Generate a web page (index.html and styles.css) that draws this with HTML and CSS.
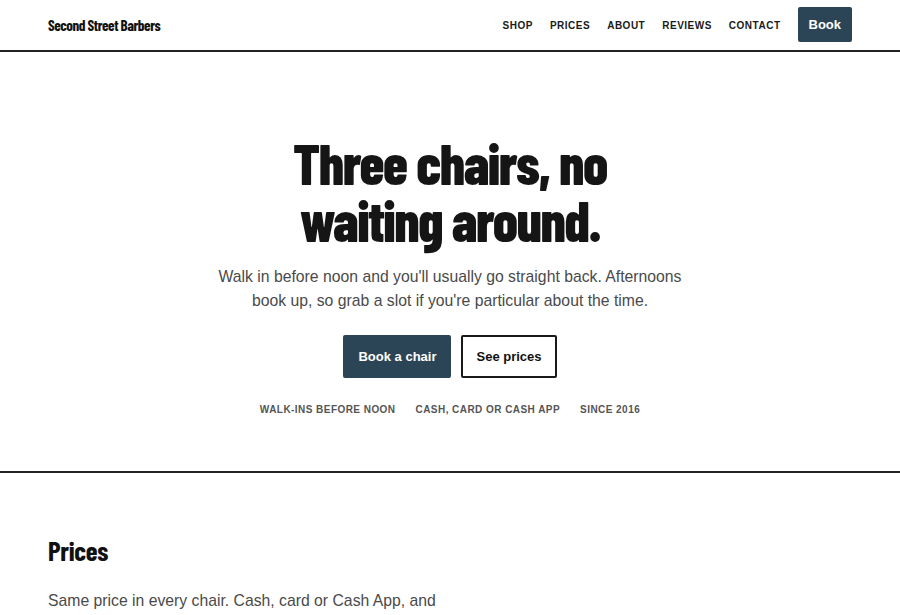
FILE: index.html
```html
<!DOCTYPE html>
<html lang="en">
<head>
<meta charset="utf-8">
<title>Second Street Barbers</title>
<link rel="stylesheet" href="styles.css">
</head>
<body>
<header class="site-header">
  <a class="logo" href="#">Second Street Barbers</a>
  <nav class="nav">
    <a href="#">Shop</a>
    <a href="#">Prices</a>
    <a href="#">About</a>
    <a href="#">Reviews</a>
    <a href="#">Contact</a>
    <a class="btn-book" href="#">Book</a>
  </nav>
</header>
<main>
  <section class="hero">
    <h1 class="hero-title">Three chairs, no<br>waiting around.</h1>
    <p class="hero-lead">Walk in before noon and you'll usually go straight back. Afternoons book up, so grab a slot if you're particular about the time.</p>
    <div class="hero-actions">
      <a class="btn btn-primary" href="#">Book a chair</a>
      <a class="btn btn-outline" href="#">See prices</a>
    </div>
    <ul class="hero-meta">
      <li>Walk-ins before noon</li>
      <li>Cash, card or Cash App</li>
      <li>Since 2016</li>
    </ul>
  </section>
  <section class="prices">
    <h2 class="section-title">Prices</h2>
    <p class="section-lead">Same price in every chair. Cash, card or Cash App, and no charge for a beard line-up with any cut.</p>
  </section>
</main>
</body>
</html>
```
FILE: styles.css
```css
* { box-sizing: border-box; }
html, body { margin: 0; padding: 0; }
body {
  font-family: "Liberation Sans", Arial, sans-serif;
  color: #1a1a1a;
  background: #fff;
}
a { color: inherit; text-decoration: none; }

.site-header {
  height: 52px;
  padding: 0 48px;
  display: flex;
  align-items: center;
  justify-content: space-between;
  border-bottom: 2px solid #222;
}
.logo {
  font-family: "Barlow Condensed", sans-serif;
  font-weight: 700;
  font-size: 15px;
  letter-spacing: -0.45px;
  color: #111;
}
.nav {
  display: flex;
  align-items: center;
  gap: 17px;
}
.nav a {
  font-size: 10px;
  font-weight: 700;
  text-transform: uppercase;
  letter-spacing: 0.5px;
  color: #1a1a1a;
}
.nav a.btn-book {
  background: #2b4557;
  color: #fff;
  text-transform: none;
  letter-spacing: 0;
  font-size: 13px;
  height: 35px;
  padding: 0 11px;
  display: flex;
  align-items: center;
  border-radius: 2px;
  margin-top: -1px;
}

.hero {
  padding: 82px 48px 54px;
  text-align: center;
  border-bottom: 2px solid #222;
}
.hero-title {
  font-family: "Barlow Condensed", sans-serif;
  font-weight: 800;
  font-size: 56px;
  line-height: 57px;
  letter-spacing: -1.5px;
  margin: 0 0 17px;
  color: #151515;
}
.hero-lead {
  font-size: 15.75px;
  line-height: 23.5px;
  color: #4a4a4a;
  max-width: 480px;
  margin: 0 auto 23px;
}
.hero-actions {
  display: flex;
  justify-content: center;
  gap: 10px;
}
.btn {
  height: 43px;
  padding: 0 13px;
  display: inline-flex;
  align-items: center;
  font-size: 13px;
  font-weight: 700;
  border: 2px solid #2b4557;
  border-radius: 2px;
}
.btn-primary { background: #2b4557; color: #fff; }
.btn-outline { background: #fff; color: #111; border-color: #1a1a1a; }

.hero-meta {
  list-style: none;
  padding: 0;
  margin: 25px 0 0;
  display: flex;
  justify-content: center;
  gap: 20px;
}
.hero-meta li {
  font-size: 10px;
  line-height: 14px;
  font-weight: 700;
  text-transform: uppercase;
  letter-spacing: 0.45px;
  color: #555;
}

.prices {
  padding: 62px 48px 40px;
}
.section-title {
  font-family: "Barlow Condensed", sans-serif;
  font-weight: 700;
  font-size: 27px;
  line-height: 30px;
  letter-spacing: -0.3px;
  margin: 0 0 24px;
  color: #111;
}
.section-lead {
  font-size: 15.75px;
  line-height: 23.5px;
  color: #4a4a4a;
  max-width: 400px;
  margin: 0;
}
```
